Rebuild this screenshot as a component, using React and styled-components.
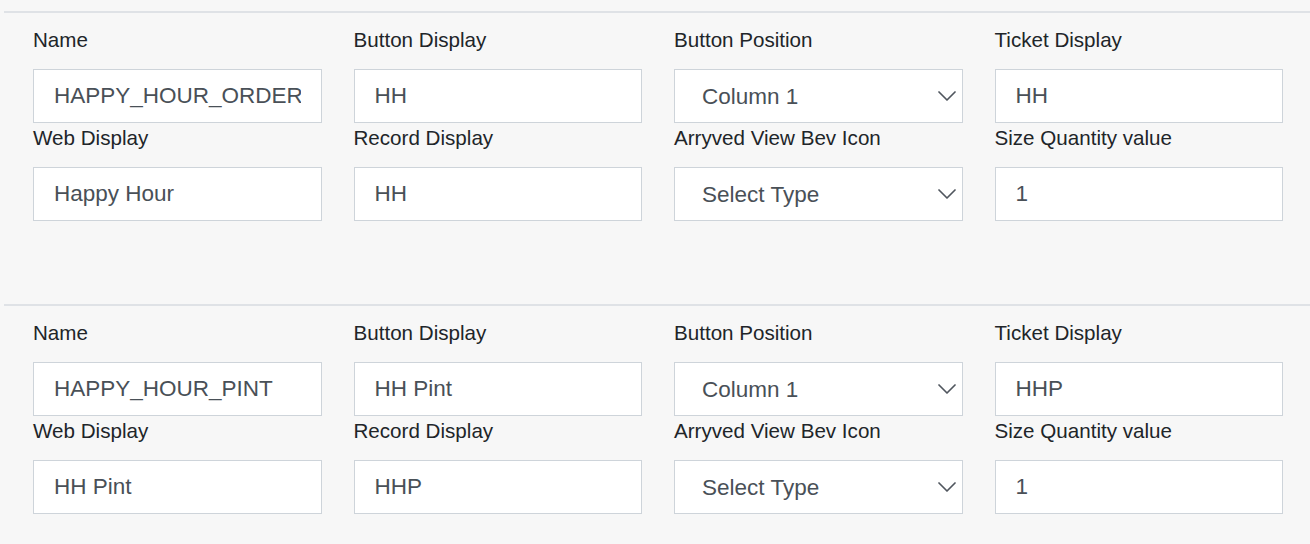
import React from 'react';
import styled, { createGlobalStyle } from 'styled-components';

const GlobalStyle = createGlobalStyle`
  html, body {
    margin: 0;
    padding: 0;
    background: #f7f7f7;
  }
  body {
    font-family: "Liberation Sans", Arial, Helvetica, sans-serif;
    color: #212529;
  }
`;

const Page = styled.div`
  padding-top: 11px;
`;

const Section = styled.section`
  margin-left: 4px;
  border-top: 2px solid #dfe2e6;
  padding: 16px 27px 83px 29px;
`;

const FieldGrid = styled.div`
  display: grid;
  grid-template-columns: repeat(4, 1fr);
  column-gap: 32px;
  row-gap: 4px;
`;

const Field = styled.div`
  display: flex;
  flex-direction: column;
  min-width: 0;
`;

const Label = styled.label`
  font-size: 20.6px;
  line-height: 22px;
  margin-bottom: 18px;
  color: #212529;
  white-space: nowrap;
`;

const TextInput = styled.input`
  box-sizing: border-box;
  width: 100%;
  height: 54px;
  margin: 0;
  padding: 0 20px;
  border: 1px solid #ced4da;
  border-radius: 0;
  background: #fff;
  font-family: inherit;
  font-size: 22.5px;
  color: #495057;
  outline: none;
`;

const SelectWrap = styled.div`
  position: relative;
  height: 54px;
`;

const Select = styled.select`
  box-sizing: border-box;
  width: 100%;
  height: 54px;
  margin: 0;
  padding: 0 40px 0 27px;
  border: 1px solid #ced4da;
  border-radius: 0;
  background: #fff;
  appearance: none;
  -webkit-appearance: none;
  font-family: inherit;
  font-size: 22.5px;
  color: #495057;
  outline: none;
`;

const Chevron = styled.svg`
  position: absolute;
  right: 7px;
  top: 50%;
  margin-top: -5px;
  pointer-events: none;
`;

const ChevronDown = () => (
  <Chevron width="18" height="10" viewBox="0 0 18 10" fill="none">
    <path
      d="M1 1l8 8 8-8"
      stroke="#50565e"
      strokeWidth="1.7"
      strokeLinecap="round"
      strokeLinejoin="round"
    />
  </Chevron>
);

const SelectField = ({ value, options }) => (
  <SelectWrap>
    <Select defaultValue={value}>
      {options.map(o => (
        <option key={o}>{o}</option>
      ))}
    </Select>
    <ChevronDown />
  </SelectWrap>
);

const positions = ['Column 1', 'Column 2', 'Column 3'];
const bevIcons = ['Select Type', 'Beer', 'Wine', 'Cocktail'];

const orderTypes = [
  {
    name: 'HAPPY_HOUR_ORDER',
    buttonDisplay: 'HH',
    ticketDisplay: 'HH',
    webDisplay: 'Happy Hour',
    recordDisplay: 'HH',
    sizeQuantity: '1',
  },
  {
    name: 'HAPPY_HOUR_PINT',
    buttonDisplay: 'HH Pint',
    ticketDisplay: 'HHP',
    webDisplay: 'HH Pint',
    recordDisplay: 'HHP',
    sizeQuantity: '1',
  },
];

const OrderTypeSection = ({ item }) => (
  <Section>
    <FieldGrid>
      <Field>
        <Label>Name</Label>
        <TextInput defaultValue={item.name} />
      </Field>
      <Field>
        <Label>Button Display</Label>
        <TextInput defaultValue={item.buttonDisplay} />
      </Field>
      <Field>
        <Label>Button Position</Label>
        <SelectField value="Column 1" options={positions} />
      </Field>
      <Field>
        <Label>Ticket Display</Label>
        <TextInput defaultValue={item.ticketDisplay} />
      </Field>
      <Field>
        <Label>Web Display</Label>
        <TextInput defaultValue={item.webDisplay} />
      </Field>
      <Field>
        <Label>Record Display</Label>
        <TextInput defaultValue={item.recordDisplay} />
      </Field>
      <Field>
        <Label>Arryved View Bev Icon</Label>
        <SelectField value="Select Type" options={bevIcons} />
      </Field>
      <Field>
        <Label>Size Quantity value</Label>
        <TextInput defaultValue={item.sizeQuantity} />
      </Field>
    </FieldGrid>
  </Section>
);

const App = () => (
  <>
    <GlobalStyle />
    <Page>
      {orderTypes.map(item => (
        <OrderTypeSection key={item.name} item={item} />
      ))}
    </Page>
  </>
);

export default App;
